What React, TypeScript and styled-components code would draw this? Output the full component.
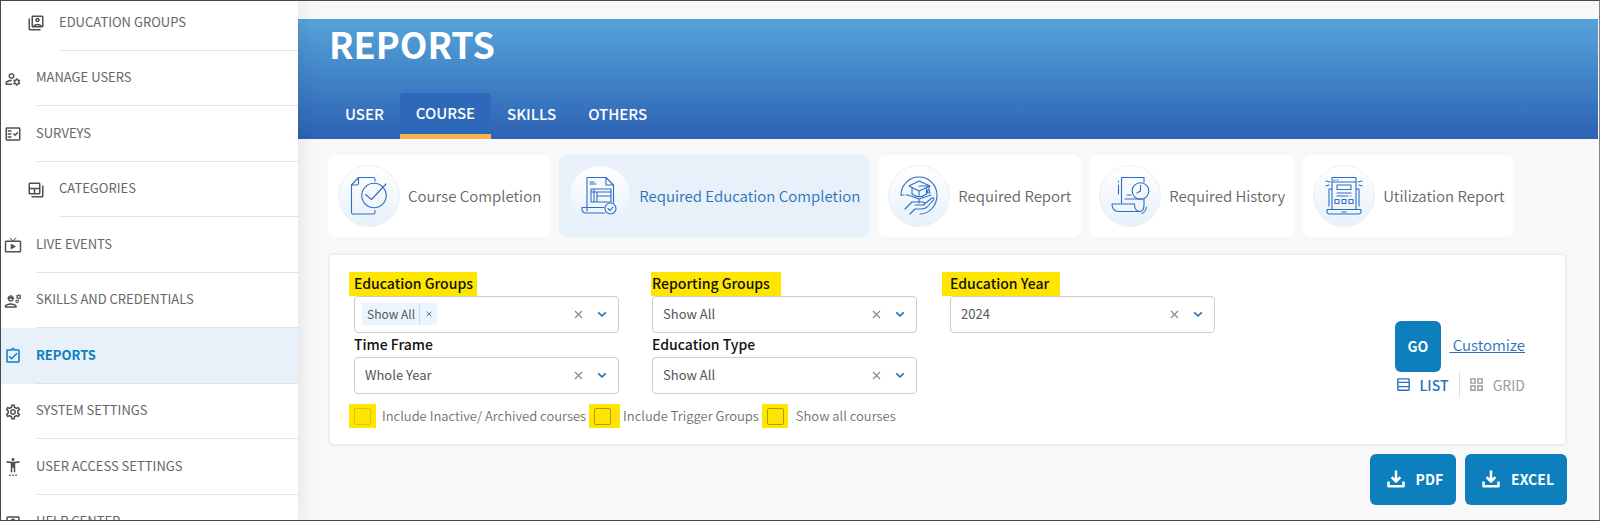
import React, { useState } from 'react';
import styled, { createGlobalStyle, css } from 'styled-components';
import {
  MdOutlineSwitchAccount,
  MdOutlineManageAccounts,
  MdOutlineFactCheck,
  MdOutlineBackupTable,
  MdLiveTv,
  MdOutlineEngineering,
  MdOutlineAssignmentTurnedIn,
  MdOutlineSettings,
  MdSettingsAccessibility,
  MdOutlinePortrait,
  MdOutlineTableRows,
  MdOutlineGridView,
} from 'react-icons/md';

const color = {
  text: '#666666',
  blue: '#0d7fbd',
  link: '#2873b8',
  pale: '#e8f0fa',
  line: '#e2e2e2',
  mark: '#ffe600',
  page: '#f8f8f8',
  frame: '#48484a',
};

const GlobalStyle = createGlobalStyle`
  *, *::before, *::after { box-sizing: border-box; }
  body { margin: 0; }
  body, button, input, select {
    font-family: "Noto Sans CJK SC", "Source Sans Pro", "Noto Sans", sans-serif;
  }
  ul { list-style: none; margin: 0; padding: 0; }
  a { color: inherit; text-decoration: none; }
  button { border: 0; padding: 0; background: none; cursor: pointer; }
  svg { display: block; flex: none; }
`;

const Frame = styled.div`
  display: flex;
  height: 100vh;
  overflow: hidden;
  border: 1px solid ${color.frame};
  border-right-color: #858585;
  background: ${color.page};
  color: ${color.text};
`;

/* ---------- Sidebar ---------- */

const Sidebar = styled.nav`
  position: relative;
  z-index: 1;
  flex: 0 0 297px;
  overflow: hidden;
  background: #fff;
  box-shadow: 2px 0 20px rgba(0, 0, 0, 0.09);
`;

const NavList = styled.ul`
  margin-top: -6px;
`;

const NavRow = styled.li<{ $active?: boolean }>`
  height: 56px;
  background: ${(p) => (p.$active ? color.pale : 'transparent')};
  &:nth-child(even) {
    height: 55px;
  }
`;

const NavLink = styled.a<{ $sub?: boolean; $active?: boolean }>`
  display: flex;
  height: 100%;
  gap: 14px;
  padding-left: ${(p) => (p.$sub ? 26 : 3)}px;
  color: ${(p) => (p.$active ? color.blue : color.text)};
  font-size: 13px;
  font-weight: ${(p) => (p.$active ? 700 : 400)};
  line-height: 20px;

  svg {
    align-self: center;
    color: ${(p) => (p.$active ? color.blue : '#505050')};
  }
`;

const NavLabel = styled.span`
  display: flex;
  flex: 1;
  align-items: center;
  padding-bottom: 2px;
  border-bottom: 1px solid ${color.line};
`;

/* ---------- Header ---------- */

const Main = styled.main`
  flex: 1;
  min-width: 0;
  padding: 18px 1px 0 0;
`;

const Banner = styled.header`
  display: flex;
  flex-direction: column;
  justify-content: space-between;
  height: 120px;
  padding: 0 31px;
  background: linear-gradient(#56a3d9, #2c62b4);
  color: #fff;
`;

const Title = styled.h1`
  margin: 0;
  font-size: 36px;
  font-weight: 700;
  line-height: 48px;
`;

const Tabs = styled.div`
  display: flex;
`;

const Tab = styled.button<{ $active?: boolean }>`
  height: 46px;
  padding: 0 16px 4px;
  color: #fff;
  font-size: 15px;
  font-weight: 500;
  line-height: 24px;
  border-radius: 4px 4px 0 0;
  ${(p) =>
    p.$active &&
    css`
      padding-bottom: 2px;
      background: #2e68b9;
      border-bottom: 5px solid #ffb14e;
    `}
`;

/* ---------- Report cards ---------- */

const Body = styled.div`
  display: flex;
  flex-direction: column;
  padding: 16px 31px 0 30px;
`;

const Cards = styled.div`
  display: flex;
  gap: 8px;
  margin-bottom: 16px;
`;

const Card = styled.button<{ $active?: boolean }>`
  display: flex;
  align-items: center;
  gap: 8px;
  height: 82px;
  padding: 0 10px;
  border-radius: 8px;
  background: ${(p) => (p.$active ? color.pale : '#fff')};
  color: ${(p) => (p.$active ? color.link : color.text)};
  font-size: 15px;
  font-weight: 350;
  line-height: 24px;
  white-space: nowrap;
`;

const Disc = styled.span`
  display: flex;
  align-items: center;
  justify-content: center;
  width: 62px;
  height: 62px;
  border: 1px solid ${color.pale};
  border-radius: 50%;
  background: linear-gradient(#fff, ${color.pale});
`;

/* ---------- Filter panel ---------- */

const Panel = styled.form`
  display: flex;
  justify-content: space-between;
  padding: 17px 40px 16px 24px;
  border: 2px solid #eeeeee;
  border-radius: 6px;
  background: #fff;
`;

const Fields = styled.div`
  display: grid;
  grid-template-columns: repeat(3, 265px);
  column-gap: 33px;
`;

const Field = styled.div`
  display: flex;
  flex-direction: column;
  align-items: flex-start;
`;

const FieldLabel = styled.label<{ $before?: number; $after?: number }>`
  height: 24px;
  margin-left: ${(p) => -(p.$before ?? 0)}px;
  padding: 0 ${(p) => p.$after ?? 0}px 0 ${(p) => p.$before ?? 0}px;
  background: ${(p) => (p.$after ? color.mark : 'transparent')};
  color: #111;
  font-size: 14px;
  font-weight: 500;
  line-height: 23px;
`;

const Control = styled.div`
  display: flex;
  align-items: center;
  width: 100%;
  height: 37px;
  padding: 0 11px 1px 10px;
  border: 1px solid #cccccc;
  border-radius: 4px;
  background: #fff;
`;

const Select = styled.select`
  appearance: none;
  flex: 1;
  min-width: 0;
  padding: 0;
  border: 0;
  background: none;
  color: #555;
  font-size: 13px;
  line-height: 20px;
`;

const Search = styled.input`
  flex: 1;
  min-width: 0;
  border: 0;
  background: none;
  font-size: 13px;
`;

const Chip = styled.span`
  display: flex;
  height: 22px;
  margin-left: -3px;
  border-radius: 2px;
  background: #ebf5ff;
  color: #555;
  font-size: 12px;
  line-height: 22px;
`;

const ChipText = styled.span`
  padding: 0 4px 0 5px;
  border-right: 1px solid #c2e0ff;
`;

const ChipRemove = styled.button`
  display: grid;
  place-items: center;
  width: 17px;
  color: #555;
`;

const Clear = styled.button`
  margin-right: 14px;
  color: #8a8a8a;
`;

const Checks = styled.div`
  display: flex;
  align-items: center;
  gap: 3px;
  margin: 10px 0 0 -5px;
`;

const Check = styled.label`
  display: flex;
  align-items: center;
  color: #707070;
  font-size: 13px;
  font-weight: 350;
  line-height: 24px;
  white-space: nowrap;
`;

const CheckMark = styled.span<{ $width: number; $gap: number; $faint?: boolean }>`
  display: flex;
  align-items: center;
  width: ${(p) => p.$width}px;
  height: 24px;
  margin-right: ${(p) => p.$gap}px;
  padding-left: 5px;
  background: ${color.mark};

  input {
    appearance: none;
    width: 17px;
    height: 17px;
    margin: 0;
    border: 1px solid ${(p) => (p.$faint ? '#d9c800' : '#a89c10')};
    border-radius: 2px;
  }
`;

/* ---------- Actions ---------- */

const Actions = styled.div`
  display: flex;
  flex-direction: column;
  padding-top: 49px;
`;

const ActionRow = styled.div`
  display: flex;
  align-items: center;
  justify-content: space-between;
  gap: 8px;
`;

const Button = styled.button`
  display: flex;
  align-items: center;
  gap: 11px;
  height: 51px;
  padding: 0 13px 2px;
  border-radius: 6px;
  background: ${color.blue};
  color: #fff;
  font-size: 14px;
  font-weight: 700;
  line-height: 24px;
`;

const Customize = styled.a`
  padding-bottom: 4px;
  color: ${color.link};
  font-size: 15px;
  font-weight: 350;
  line-height: 24px;
  text-decoration: underline;
  white-space: pre;
`;

const ViewButton = styled.button<{ $active?: boolean }>`
  display: flex;
  align-items: center;
  gap: 8px;
  height: 25px;
  color: ${(p) => (p.$active ? color.link : '#999')};
  font-size: 14px;
  font-weight: ${(p) => (p.$active ? 500 : 400)};
  line-height: 24px;

  & + & {
    padding-left: 8px;
    border-left: 1px solid #ddd;
  }
`;

const Exports = styled.div`
  display: flex;
  justify-content: flex-end;
  gap: 9px;
  margin-top: 8px;

  button {
    padding-left: 17px;
  }
`;

/* ---------- Drawings ---------- */

const Cross = ({ size }: { size: number }) => (
  <svg width={size} height={size} viewBox="0 0 9 9" stroke="currentColor" fill="none" strokeWidth="1.2">
    <path d="M1 1l7 7M8 1l-7 7" />
  </svg>
);

const Chevron = () => (
  <svg width="10" height="10" viewBox="0 0 10 10" stroke="#2273ba" fill="none" strokeWidth="1.6">
    <path d="M1.2 3.3L5 6.9l3.8-3.6" />
  </svg>
);

const Download = () => (
  <svg width="18" height="18" viewBox="0 0 18 18" stroke="currentColor" fill="none" strokeWidth="2.5" strokeLinejoin="round">
    <path d="M9 0.500v11M4.600 7.200L9 11.500l4.400-4.300M1.500 11.500v4.800h15v-4.800" />
  </svg>
);

const Drawing = ({ children }: { children: React.ReactNode }) => (
  <svg width="40" height="40" viewBox="0 0 40 40" fill="none" stroke="#2b6fc4" strokeWidth="1.1" strokeLinecap="round" strokeLinejoin="round">
    {children}
  </svg>
);

const CompletionDrawing = () => (
  <Drawing>
    <path d="M26 5V3.500Q26 1.500 24 1.500H9.500L2.500 9V36.500Q2.500 38 4 38H24.500Q26 38 26 36.500V34.500" />
    <path d="M9.500 1.500V7.500Q9.500 9 8 9H2.500" />
    <circle cx="25" cy="19.500" r="12.200" />
    <path d="M16.500 18.500L22.500 23.500L37 8" />
  </Drawing>
);

const EducationDrawing = () => (
  <Drawing>
    <path d="M7 31V1.500H26L33.500 9V27M26 1.500V9H33.500" />
    <path d="M10 6H14M10 8H16M11 13H31V26H11ZM11 16H31M14 13V26M17 16V26M17 20H31" />
    <path d="M24 31.500H2V33Q2 37 6 37H24.500M7 31.500V35" />
    <circle cx="30.500" cy="32.500" r="5.500" />
    <path d="M28 32.500L30 34.500L33 31" />
  </Drawing>
);

const ReportDrawing = () => (
  <Drawing>
    <path d="M2 19A18 18 0 0 1 38 19Q38 27 33 32.500Q28 38 21 38" />
    <path d="M10 10L20 5L31 10L20 15ZM20 10H30V14M13 12V18Q20 23.500 27.500 18V12M20 15V20M29 14L28 17H31L30 14" />
    <path d="M9 19L20 23L32 19M2 19H5M7 19H9M20 23V27" />
    <path d="M6 33L13 26H23Q27 26 25.500 28.500Q25 29 23 29H16M25.500 28L33 22Q36 21 34.500 24L28 31Q26 33 22 33H16L11 38" />
  </Drawing>
);

const HistoryDrawing = () => (
  <Drawing>
    <path d="M11.500 27V1.500H34V6M8.500 9V18M8.500 5V6M17 19H21M15 23H32" />
    <circle cx="30.500" cy="15" r="8.300" />
    <path d="M30.500 9.500V15L27 17" />
    <path d="M2 28H24.500V29Q25 35.500 30 35.500H9Q2 35.500 2 28ZM30 35.500Q34 35 34 29V23M36.500 31Q35.500 36 32 37.500" />
  </Drawing>
);

const UtilizationDrawing = () => (
  <Drawing>
    <path d="M8 29V1.500H32V33M8 6H32M10 4H11M13 4H14M8 33V29M13 9H27V13.500H13ZM13 17H27M13 20H24M26.500 20H27" />
    <path d="M11 23.500H15V27.500H11ZM18 23.500H22V27.500H18ZM25 23.500H29V27.500H25ZM8 13H5V30M32 13H35V30" />
    <path d="M3 33.500H37V35.500Q37 38 34.500 38H5.500Q3 38 3 35.500ZM18 36H22M2 5L6 6M2 10L5 9M34 6L38 5M35 9L38 10" />
  </Drawing>
);

/* ---------- Data ---------- */

const navItems = [
  { label: 'EDUCATION GROUPS', Icon: MdOutlineSwitchAccount, sub: true },
  { label: 'MANAGE USERS', Icon: MdOutlineManageAccounts },
  { label: 'SURVEYS', Icon: MdOutlineFactCheck },
  { label: 'CATEGORIES', Icon: MdOutlineBackupTable, sub: true },
  { label: 'LIVE EVENTS', Icon: MdLiveTv },
  { label: 'SKILLS AND CREDENTIALS', Icon: MdOutlineEngineering },
  { label: 'REPORTS', Icon: MdOutlineAssignmentTurnedIn, active: true },
  { label: 'SYSTEM SETTINGS', Icon: MdOutlineSettings },
  { label: 'USER ACCESS SETTINGS', Icon: MdSettingsAccessibility },
  { label: 'HELP CENTER', Icon: MdOutlinePortrait },
];

const tabs = ['USER', 'COURSE', 'SKILLS', 'OTHERS'];

const reports = [
  { label: 'Course Completion', Art: CompletionDrawing },
  { label: 'Required Education Completion', Art: EducationDrawing },
  { label: 'Required Report', Art: ReportDrawing },
  { label: 'Required History', Art: HistoryDrawing },
  { label: 'Utilization Report', Art: UtilizationDrawing },
];

const fields = [
  { id: 'groups', label: 'Education Groups', value: 'Show All', before: 5, after: 4, multi: true },
  { id: 'reporting', label: 'Reporting Groups', value: 'Show All', before: 1, after: 11 },
  { id: 'year', label: 'Education Year', value: '2024', before: 8, after: 11 },
  { id: 'frame', label: 'Time Frame', value: 'Whole Year' },
  { id: 'type', label: 'Education Type', value: 'Show All' },
];

const checks = [
  { label: 'Include Inactive/ Archived courses', width: 27, gap: 6, faint: true },
  { label: 'Include Trigger Groups', width: 31, gap: 3 },
  { label: 'Show all courses', width: 26, gap: 8 },
];

export default function App() {
  const [tab, setTab] = useState('COURSE');
  const [report, setReport] = useState('Required Education Completion');
  const [view, setView] = useState('LIST');

  return (
    <Frame>
      <GlobalStyle />
      <Sidebar>
        <NavList>
          {navItems.map(({ label, Icon, sub, active }) => (
            <NavRow key={label} $active={active}>
              <NavLink href="#" $sub={sub} $active={active}>
                <Icon size={18} />
                <NavLabel>{label}</NavLabel>
              </NavLink>
            </NavRow>
          ))}
        </NavList>
      </Sidebar>
      <Main>
        <Banner>
          <Title>REPORTS</Title>
          <Tabs>
            {tabs.map((t) => (
              <Tab key={t} $active={t === tab} onClick={() => setTab(t)}>
                {t}
              </Tab>
            ))}
          </Tabs>
        </Banner>
        <Body>
          <Cards>
            {reports.map(({ label, Art }) => (
              <Card key={label} $active={label === report} onClick={() => setReport(label)}>
                <Disc>
                  <Art />
                </Disc>
                {label}
              </Card>
            ))}
          </Cards>
          <Panel onSubmit={(e) => e.preventDefault()}>
            <div>
              <Fields>
                {fields.map((f) => (
                  <Field key={f.id}>
                    <FieldLabel htmlFor={f.id} $before={f.before} $after={f.after}>
                      {f.label}
                    </FieldLabel>
                    <Control>
                      {f.multi ? (
                        <>
                          <Chip>
                            <ChipText>{f.value}</ChipText>
                            <ChipRemove type="button" aria-label="Remove Show All">
                              <Cross size={6} />
                            </ChipRemove>
                          </Chip>
                          <Search id={f.id} />
                        </>
                      ) : (
                        <Select id={f.id}>
                          <option>{f.value}</option>
                        </Select>
                      )}
                      <Clear type="button" aria-label="Clear">
                        <Cross size={9} />
                      </Clear>
                      <Chevron />
                    </Control>
                  </Field>
                ))}
              </Fields>
              <Checks>
                {checks.map((c) => (
                  <Check key={c.label}>
                    <CheckMark $width={c.width} $gap={c.gap} $faint={c.faint}>
                      <input type="checkbox" />
                    </CheckMark>
                    {c.label}
                  </Check>
                ))}
              </Checks>
            </div>
            <Actions>
              <ActionRow>
                <Button type="submit">GO</Button>
                <Customize href="#"> Customize</Customize>
              </ActionRow>
              <ActionRow>
                <ViewButton type="button" $active={view === 'LIST'} onClick={() => setView('LIST')}>
                  <MdOutlineTableRows size={17} />
                  LIST
                </ViewButton>
                <ViewButton type="button" $active={view === 'GRID'} onClick={() => setView('GRID')}>
                  <MdOutlineGridView size={17} />
                  GRID
                </ViewButton>
              </ActionRow>
            </Actions>
          </Panel>
          <Exports>
            <Button type="button">
              <Download />
              PDF
            </Button>
            <Button type="button">
              <Download />
              EXCEL
            </Button>
          </Exports>
        </Body>
      </Main>
    </Frame>
  );
}
